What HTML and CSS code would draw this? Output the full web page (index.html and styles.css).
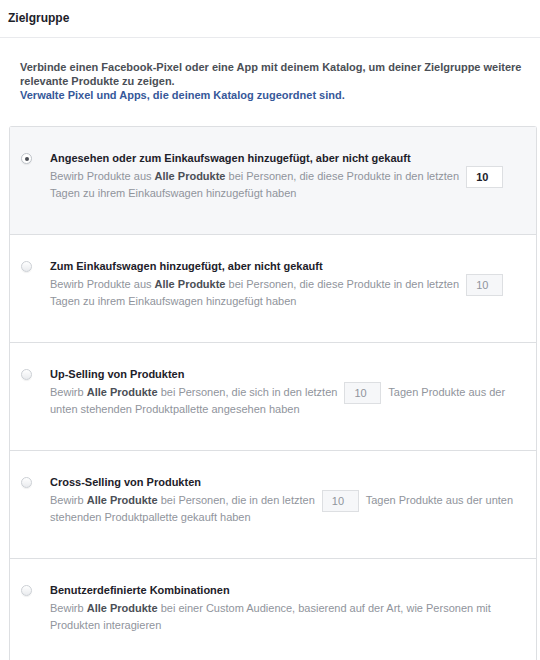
FILE: index.html
```html
<!DOCTYPE html>
<html lang="de">
<head>
    <meta charset="UTF-8">
    <meta name="viewport" content="width=device-width, initial-scale=1.0">
    <title>Zielgruppe</title>
    <link rel="stylesheet" href="styles.css">
</head>
<body>
    <div class="section-head">Zielgruppe</div>

    <div class="section-body">
      <p class="intro">
        Verbinde einen Facebook-Pixel oder eine App mit deinem Katalog, um deiner Zielgruppe weitere relevante Produkte zu zeigen.<br>
        <a href="#" class="link">Verwalte Pixel und Apps, die deinem Katalog zugeordnet sind.</a>
      </p>

      <div class="options">
        <label class="option selected">
          <span class="radio"></span>
          <div class="option-text">
            <div class="option-title">Angesehen oder zum Einkaufswagen hinzugefügt, aber nicht gekauft</div>
            <div class="option-desc">Bewirb Produkte aus <b>Alle Produkte</b> bei Personen, die diese Produkte in den letzten <input type="text" class="days" value="10"> Tagen zu ihrem Einkaufswagen hinzugefügt haben</div>
          </div>
        </label>

        <label class="option">
          <span class="radio"></span>
          <div class="option-text">
            <div class="option-title">Zum Einkaufswagen hinzugefügt, aber nicht gekauft</div>
            <div class="option-desc">Bewirb Produkte aus <b>Alle Produkte</b> bei Personen, die diese Produkte in den letzten <input type="text" class="days" value="10" disabled> Tagen zu ihrem Einkaufswagen hinzugefügt haben</div>
          </div>
        </label>

        <label class="option">
          <span class="radio"></span>
          <div class="option-text">
            <div class="option-title">Up-Selling von Produkten</div>
            <div class="option-desc">Bewirb <b>Alle Produkte</b> bei Personen, die sich in den letzten <input type="text" class="days" value="10" disabled> Tagen Produkte aus der unten stehenden Produktpallette angesehen haben</div>
          </div>
        </label>

        <label class="option">
          <span class="radio"></span>
          <div class="option-text">
            <div class="option-title">Cross-Selling von Produkten</div>
            <div class="option-desc">Bewirb <b>Alle Produkte</b> bei Personen, die in den letzten <input type="text" class="days" value="10" disabled> Tagen Produkte aus der unten stehenden Produktpallette gekauft haben</div>
          </div>
        </label>

        <label class="option">
          <span class="radio"></span>
          <div class="option-text">
            <div class="option-title">Benutzerdefinierte Kombinationen</div>
            <div class="option-desc">Bewirb <b>Alle Produkte</b> bei einer Custom Audience, basierend auf der Art, wie Personen mit Produkten interagieren</div>
          </div>
        </label>
      </div>
    </div>
</body>
</html>
```

FILE: styles.css
```css
* {
  margin: 0;
  padding: 0;
  box-sizing: border-box;
}
body {
  font-family: "Liberation Sans", Arial, sans-serif;
  background-color: #fff;
  color: #1d2129;
}
.section-head {
  padding: 10px 8px 11px;
  line-height: 16px;
  font-size: 12px;
  font-weight: bold;
  color: #1d2129;
  border-bottom: 1px solid #e9eaed;
}
.section-body {
  padding: 22px 3px 0 9px;
}
.intro {
  margin: 0 0 24px 11px;
  font-size: 11px;
  line-height: 14px;
  font-weight: bold;
  color: #4b4f56;
}
.link {
  color: #365899;
  text-decoration: none;
}
.options {
  border: 1px solid #dddfe2;
  border-bottom: none;
  border-radius: 3px 3px 0 0;
}
.option {
  display: flex;
  align-items: flex-start;
  height: 108px;
  padding: 23px 10px 0 11px;
  border-bottom: 1px solid #dddfe2;
  cursor: pointer;
}
.option.selected {
  background-color: #f6f7f9;
}
.radio {
  flex: none;
  width: 11px;
  height: 11px;
  margin: 3px 18px 0 0;
  border: 1px solid #ccd0d5;
  border-radius: 50%;
  background: linear-gradient(#fff, #e9ebee);
  box-shadow: 0 1px 1px rgba(0, 0, 0, 0.06);
  display: flex;
  align-items: center;
  justify-content: center;
}
.option.selected .radio {
  background: #fff;
  border-color: #bec3c9;
}
.option.selected .radio:after {
  content: "";
  width: 4px;
  height: 4px;
  border-radius: 50%;
  background-color: #4b4f56;
}
.option-text {
  flex: 1;
}
.option-title {
  font-size: 11px;
  line-height: 16px;
  font-weight: bold;
  color: #1d2129;
}
.option-desc {
  margin-top: 2px;
  font-size: 11px;
  line-height: 17px;
  color: #90949c;
}
.option-desc b {
  color: #4b4f56;
}
.days {
  width: 37px;
  height: 22px;
  margin: -3px 4px;
  padding-left: 9px;
  vertical-align: middle;
  border: 1px solid #dddfe2;
  font-family: inherit;
  font-size: 11px;
  font-weight: bold;
  color: #1d2129;
  background-color: #fff;
  outline: none;
}
.days:disabled {
  background-color: #f6f7f9;
  color: #90949c;
  font-weight: normal;
}
```
